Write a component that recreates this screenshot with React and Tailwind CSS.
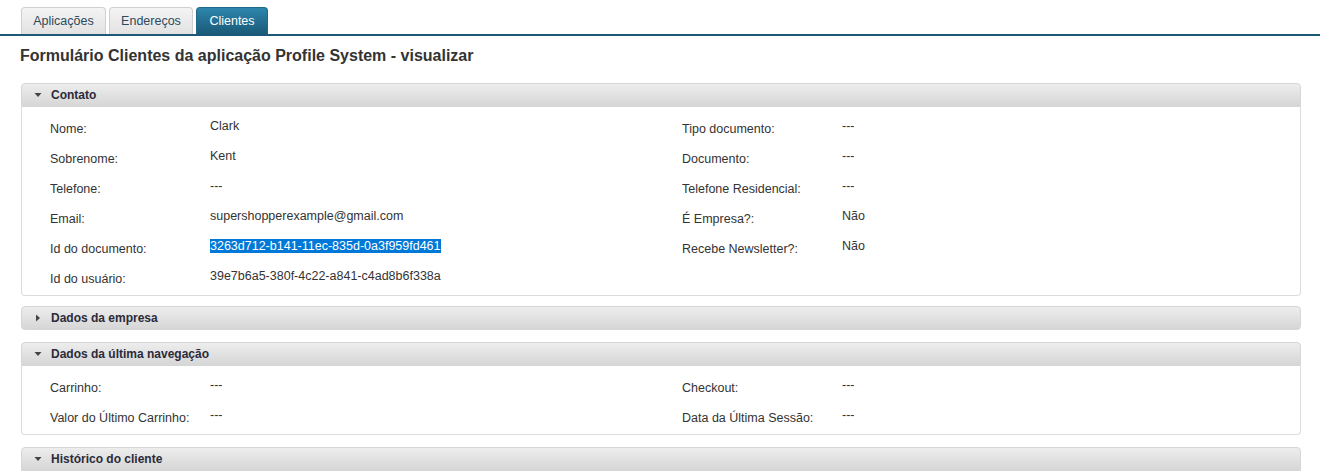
import React from "react";

function Tri({ open }) {
  return open ? (
    <svg width="8" height="8" viewBox="0 0 8 8" className="shrink-0">
      <polygon points="0.5,2 7.5,2 4,6" fill="#444" />
    </svg>
  ) : (
    <svg width="8" height="8" viewBox="0 0 8 8" className="shrink-0">
      <polygon points="2,0.5 6,4 2,7.5" fill="#444" />
    </svg>
  );
}

function PanelHeader({ title, open }) {
  return (
    <div
      className={`h-[24px] flex items-center gap-[9px] pl-[12px] border border-[#d6d6d6] bg-gradient-to-b from-[#ededed] to-[#d6d6d6] text-[12px] font-bold text-[#2b2b3a] ${
        open ? "rounded-t-[4px]" : "rounded-[4px]"
      }`}
    >
      <Tri open={open} />
      <span>{title}</span>
    </div>
  );
}

function Field({ label, value, selected }) {
  return (
    <div className="flex h-[30px]">
      <div className="w-[160px] pt-[9px] leading-[15px] shrink-0">{label}</div>
      <div className="pt-[6px] leading-[14px]">
        {selected ? (
          <span className="bg-[#0078d7] text-white">{value}</span>
        ) : (
          value
        )}
      </div>
    </div>
  );
}

function Section({ left, right }) {
  return (
    <div className="border border-t-0 border-[#dcdcdc] rounded-b-[4px] bg-white flex pt-[6px] pb-[2px] text-[12.5px] text-[#333]">
      <div className="w-[660px] pl-[28px] shrink-0">
        {left.map((f, i) => (
          <Field key={i} {...f} />
        ))}
      </div>
      <div className="flex-1">
        {right.map((f, i) => (
          <Field key={i} {...f} />
        ))}
      </div>
    </div>
  );
}

export default function App() {
  const tabBase =
    "h-[27px] flex items-center text-[12.5px] rounded-t-[4px] border border-b-0";
  return (
    <div
      className="w-[1320px] h-[476px] bg-white overflow-hidden"
      style={{ fontFamily: '"Liberation Sans", Arial, sans-serif' }}
    >
      <div className="flex items-end gap-[3px] pl-[21px] pt-[7px] border-b-2 border-[#1c5877]">
        <div className={`${tabBase} w-[85px] justify-center border-[#cfcfcf] bg-gradient-to-b from-[#f4f4f4] to-[#e2e2e2] text-[#2d4a5c]`}>
          Aplicações
        </div>
        <div className={`${tabBase} w-[84px] justify-center border-[#cfcfcf] bg-gradient-to-b from-[#f4f4f4] to-[#e2e2e2] text-[#2d4a5c]`}>
          Endereços
        </div>
        <div className={`${tabBase} w-[72px] justify-center border-[#1f6a8c] bg-gradient-to-b from-[#2e86ad] to-[#1a5a78] text-white`}>
          Clientes
        </div>
      </div>

      <h1 className="pl-[20px] pt-[11px] h-[47px] text-[16px] font-bold text-[#333] leading-[18px]">
        Formulário Clientes da aplicação Profile System - visualizar
      </h1>

      <div className="pl-[21px] pr-[19px] flex flex-col">
        <div>
          <PanelHeader title="Contato" open />
          <Section
            left={[
              { label: "Nome:", value: "Clark" },
              { label: "Sobrenome:", value: "Kent" },
              { label: "Telefone:", value: "---" },
              { label: "Email:", value: "supershopperexample@gmail.com" },
              {
                label: "Id do documento:",
                value: "3263d712-b141-11ec-835d-0a3f959fd461",
                selected: true,
              },
              {
                label: "Id do usuário:",
                value: "39e7b6a5-380f-4c22-a841-c4ad8b6f338a",
              },
            ]}
            right={[
              { label: "Tipo documento:", value: "---" },
              { label: "Documento:", value: "---" },
              { label: "Telefone Residencial:", value: "---" },
              { label: "É Empresa?:", value: "Não" },
              { label: "Recebe Newsletter?:", value: "Não" },
            ]}
          />
        </div>

        <div className="mt-[10px]">
          <PanelHeader title="Dados da empresa" open={false} />
        </div>

        <div className="mt-[12px]">
          <PanelHeader title="Dados da última navegação" open />
          <Section
            left={[
              { label: "Carrinho:", value: "---" },
              { label: "Valor do Último Carrinho:", value: "---" },
            ]}
            right={[
              { label: "Checkout:", value: "---" },
              { label: "Data da Última Sessão:", value: "---" },
            ]}
          />
        </div>

        <div className="mt-[12px]">
          <PanelHeader title="Histórico do cliente" open />
        </div>
      </div>
    </div>
  );
}
